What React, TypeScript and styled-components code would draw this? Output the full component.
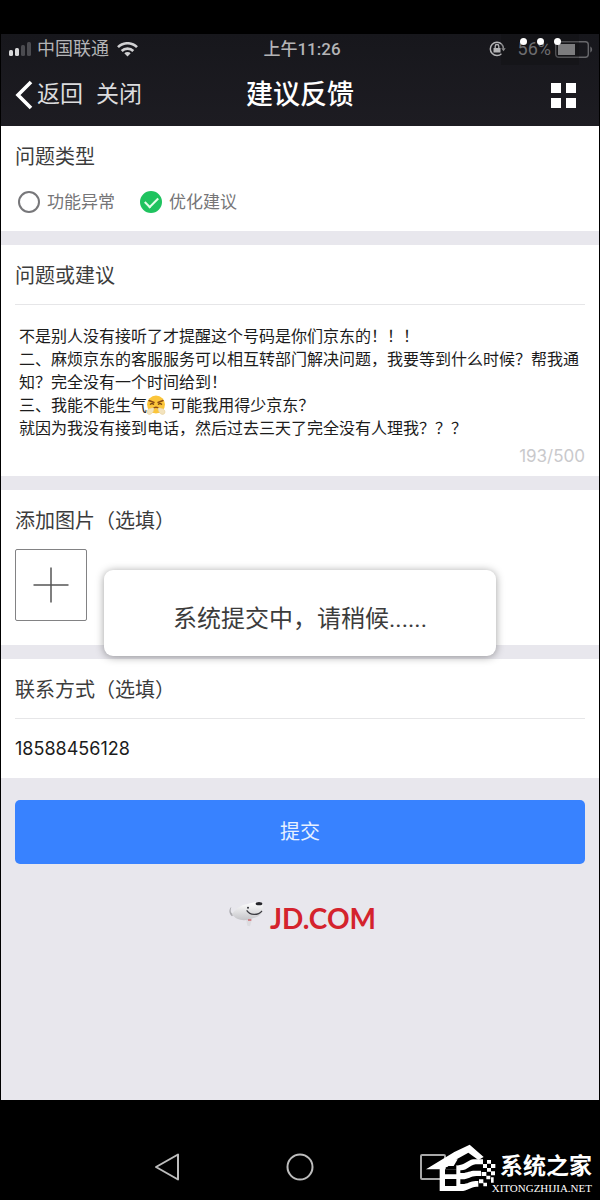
import React, { useState } from 'react';
import styled, { createGlobalStyle } from 'styled-components';

const cjk = `'Noto Sans CJK SC', sans-serif`;

const GlobalStyle = createGlobalStyle`
  * { box-sizing: border-box; }
  body {
    margin: 0;
    background: #000;
    font-family: Roboto, ${cjk};
    color: #3c3c3c;
  }
  button, input, textarea { font: inherit; color: inherit; }
`;

const Phone = styled.div`
  display: flex;
  flex-direction: column;
  min-height: 100vh;
  padding: 34px 1px 0;
  background: #000;
`;

const Header = styled.header`
  position: relative;
  background: linear-gradient(#17171c, #1d1c22);
`;

const StatusBar = styled.div`
  display: grid;
  grid-template-columns: 1fr auto 1fr;
  align-items: center;
  height: 30px;
  padding: 0 6px;
  color: #b4b4b6;
  font-size: 18px;
  line-height: 28px;
`;

const StatusGroup = styled.div<{ $end?: boolean }>`
  display: flex;
  align-items: center;
  gap: ${(p) => (p.$end ? 4 : 5)}px;
  justify-content: ${(p) => (p.$end ? 'flex-end' : 'flex-start')};
`;

const Carrier = styled.span`
  margin-right: 3px;
`;

const Clock = styled.span`
  padding-left: 4px;
  font-weight: 500;
  font-size: 17px;
`;

const BatteryText = styled.span`
  margin-left: 8px;
  color: #8e8e91;
`;

const MoreOverlay = styled.div`
  position: absolute;
  top: 0;
  right: 20px;
  display: flex;
  justify-content: center;
  gap: 10px;
  width: 78px;
  height: 31px;
  padding-top: 4px;
  background: rgba(10, 10, 13, 0.25);
`;

const Dot = styled.i`
  width: 7px;
  height: 7px;
  border-radius: 50%;
  background: #fff;
`;

const NavBar = styled.nav`
  display: grid;
  grid-template-columns: 1fr auto 1fr;
  align-items: center;
  height: 62px;
  padding: 0 13px;
  color: #dcdcde;
`;

const NavActions = styled.div`
  display: flex;
  align-items: center;
  gap: 13px;
`;

const NavButton = styled.button`
  display: flex;
  align-items: center;
  gap: 3px;
  padding: 0;
  border: 0;
  background: none;
  font-size: 23px;
  line-height: 32px;
`;

const NavTitle = styled.h1`
  margin: 0;
  color: #fff;
  font-size: 27px;
  font-weight: 500;
  line-height: 40px;
`;

const MenuButton = styled.button`
  justify-self: end;
  display: grid;
  grid-template-columns: 10px 10px;
  gap: 5px;
  margin-right: 10px;
  padding: 0;
  border: 0;
  background: none;
`;

const MenuSquare = styled.i`
  height: 10px;
  background: #fff;
`;

const Form = styled.form`
  flex: 1;
  display: flex;
  flex-direction: column;
  gap: 14px;
  background: #e8e7ed;
`;

const Section = styled.section`
  position: relative;
  padding: 0 14px;
  background: #fff;
`;

const SectionTitle = styled.h2<{ $divided?: boolean }>`
  margin: 0;
  padding-top: 3px;
  font-size: 20px;
  font-weight: 400;
  line-height: 56px;
  border-bottom: ${(p) => (p.$divided ? '1px solid #e6e6e8' : '0')};
`;

const Options = styled.div`
  display: flex;
  gap: 25px;
  padding: 3px 3px 15px;
`;

const Option = styled.label`
  display: flex;
  align-items: center;
  gap: 7px;
  color: #757577;
  font-size: 17px;
  line-height: 28px;
`;

const Radio = styled.input`
  appearance: none;
  display: grid;
  place-items: center;
  width: 22px;
  height: 22px;
  margin: 0;
  border: 2px solid #77777a;
  border-radius: 50%;
  &:checked {
    border-color: #1fc35f;
    background: #1fc35f;
  }
  &:checked::before {
    content: '';
    width: 11px;
    height: 6px;
    margin-bottom: 3px;
    border: solid #e4ffe9;
    border-width: 0 0 2px 2px;
    transform: rotate(-45deg);
  }
`;

const MessageBox = styled.div`
  position: relative;
  padding-top: 19px;
`;

const Message = styled.textarea`
  display: block;
  width: 100%;
  height: 120px;
  padding: 0 4px;
  border: 0;
  outline: 0;
  resize: none;
  overflow: hidden;
  background: none;
  color: #1c1c1c;
  font-family: ${cjk};
  font-size: 16px;
  line-height: 23px;
`;

const Emoji = styled.svg`
  position: absolute;
  top: 90px;
  left: 131px;
`;

const Counter = styled.div`
  padding-bottom: 8px;
  color: #c9c9cc;
  font-family: Inter, sans-serif;
  font-size: 17px;
  line-height: 24px;
  text-align: right;
`;

const AddImage = styled.button`
  display: grid;
  place-items: center;
  width: 72px;
  height: 72px;
  margin-bottom: 24px;
  padding: 0;
  border: 1px solid #828284;
  border-radius: 2px;
  background: #fff;
`;

const Toast = styled.div`
  position: absolute;
  z-index: 1;
  top: 80px;
  left: 0;
  right: 0;
  width: 392px;
  max-width: 90%;
  margin: 0 auto;
  border-radius: 9px;
  background: #fff;
  box-shadow: 0 1px 9px rgba(0, 0, 0, 0.38);
  font-size: 24px;
  line-height: 36px;
  padding: 31px 0 19px;
  text-align: center;
`;

const PhoneNumber = styled.input`
  display: block;
  width: 100%;
  height: 59px;
  padding: 0;
  border: 0;
  outline: 0;
  background: none;
  color: #1c1c1c;
  font-family: Inter, sans-serif;
  font-size: 18px;
`;

const Footer = styled.div`
  padding: 8px 14px 160px;
`;

const Submit = styled.button`
  display: block;
  width: 100%;
  height: 64px;
  padding: 0 0 4px;
  border: 0;
  border-radius: 5px;
  background: #3882ff;
  color: #e8f1ff;
  font-size: 20px;
`;

const Brand = styled.div`
  display: flex;
  justify-content: center;
  align-items: flex-start;
  gap: 6px;
  margin-top: 35px;
  padding-left: 4px;
  color: #d4232d;
  font-family: Lato, sans-serif;
  font-size: 28px;
  font-weight: 700;
  line-height: 38px;
`;

const SystemBar = styled.footer`
  position: relative;
  height: 100px;
  padding-top: 33px;
`;

const SystemKeys = styled.div`
  display: grid;
  grid-template-columns: repeat(3, 1fr);
  max-width: 399px;
  height: 67px;
  margin: 0 auto;
`;

const KeyButton = styled.button`
  display: grid;
  place-items: center;
  padding: 0;
  border: 0;
  background: none;
`;

const Watermark = styled.div`
  position: absolute;
  right: 7px;
  bottom: 4px;
  display: flex;
  color: #fff;
`;

const WatermarkText = styled.div`
  display: flex;
  flex-direction: column;
  align-items: flex-end;
  padding-top: 12px;
  margin-left: -9px;
`;

const WatermarkName = styled.strong`
  font-size: 23px;
  font-weight: 700;
  line-height: 30px;
`;

const WatermarkSite = styled.span`
  font-family: 'Liberation Serif', serif;
  font-size: 11px;
  line-height: 12px;
`;

const initialMessage = [
  '不是别人没有接听了才提醒这个号码是你们京东的！！！',
  '二、麻烦京东的客服服务可以相互转部门解决问题，我要等到什么时候？帮我通知？完全没有一个时间给到！',
  '三、我能不能生气\u3000\u00a0\u00a0可能我用得少京东？',
  '就因为我没有接到电话，然后过去三天了完全没有人理我？？？',
].join('\n');

const SignalIcon = () => (
  <svg width="25" height="16" viewBox="0 0 25 16">
    <rect x="2" y="9" width="4" height="6" rx="1.500" fill="#d8d8da" />
    <rect x="8" y="7" width="4" height="8" rx="1.500" fill="#d8d8da" />
    <rect x="14" y="4" width="4" height="11" rx="1.500" fill="#4b4b50" />
    <rect x="20" y="1" width="4" height="14" rx="1.500" fill="#4b4b50" />
  </svg>
);

const WifiIcon = () => (
  <svg width="21" height="15" viewBox="0 0 21 15" fill="none" stroke="#d0d0d2" strokeWidth="2.600">
    <path d="M1 5.200a13.400 13.400 0 0 1 19 0" />
    <path d="M4.700 9a8.200 8.200 0 0 1 11.600 0" />
    <path d="M10.500 14.500 7.300 11.300a4.500 4.500 0 0 1 6.400 0Z" fill="#d0d0d2" stroke="none" />
  </svg>
);

const LockIcon = () => (
  <svg width="17" height="16" viewBox="0 0 17 16" fill="none" stroke="#b4b4b6">
    <path d="M12.600 3A6.700 6.700 0 1 0 12.600 12.800" strokeWidth="1.500" />
    <path d="M12.300 2.700A6.700 6.700 0 0 1 14.400 7.500" strokeWidth="1.500" />
    <path d="M12.300 7.200h4.400l-2.200 3Z" fill="#b4b4b6" stroke="none" />
    <rect x="4.500" y="7" width="7" height="4.500" fill="#b4b4b6" stroke="none" />
    <path d="M6.200 7V5.300a1.800 1.800 0 0 1 3.600 0V7" strokeWidth="1.300" />
  </svg>
);

const BatteryIcon = () => (
  <svg width="38" height="17" viewBox="0 0 38 17">
    <rect x="0.700" y="0.700" width="32.600" height="15.600" rx="3" fill="none" stroke="#66666a" strokeWidth="1.400" />
    <rect x="3" y="3" width="17" height="11" fill="#a2a2a4" />
    <path d="M35.300 5.500c2.400 1 2.400 5 0 6Z" fill="#66666a" />
  </svg>
);

const BackIcon = () => (
  <svg width="20" height="30" viewBox="0 0 20 30" fill="none" stroke="#fff" strokeWidth="3.600">
    <path d="M17 2 4 15 17 28" />
  </svg>
);

const SteamFace = () => (
  <Emoji width="20" height="20" viewBox="0 0 20 20" aria-hidden="true">
    <circle cx="10" cy="9.500" r="9" fill="#fbc53a" />
    <path d="M3 5.500 8 7.500M17 5.500 12 7.500" stroke="#8a4b14" strokeWidth="1.400" strokeLinecap="round" />
    <path d="M4 9.500q2-1.600 4 0M12 9.500q2-1.600 4 0" stroke="#6b3a12" strokeWidth="1.300" fill="none" />
    <path d="M6.500 14q3.500-3.400 7 0" stroke="#8a4b14" strokeWidth="1.300" fill="none" />
    <path d="M8 13C5 12.500 1 14 1 17s4 3 5 1c1.500-1 2-3 2-5ZM12 13c3-.500 7 1 7 4s-4 3-5 1c-1.500-1-2-3-2-5Z" fill="#f3e3bd" stroke="#e3c98a" strokeWidth="0.500" />
  </Emoji>
);

const DogLogo = () => (
  <svg width="36" height="30" viewBox="0 0 108 90">
    <defs>
      <linearGradient id="dog" x1="0" y1="0" x2="0" y2="1">
        <stop offset="0" stopColor="#ffffff" />
        <stop offset="1" stopColor="#c4c4c8" />
      </linearGradient>
    </defs>
    <path d="M18 46C8 44 6 36 10 24C2 30 2 44 12 52Z" fill="#a9a9ae" />
    <path d="M54 60 58 80 66 82 72 60Z" fill="#dcdce0" />
    <path d="M12 46C22 30 42 16 58 16C72 8 104 6 104 18C108 38 98 54 76 57C52 68 26 66 12 46Z" fill="url(#dog)" />
    <path d="M56 34C66 50 90 50 102 36" fill="none" stroke="#3c3c42" strokeWidth="3.500" />
    <ellipse cx="93" cy="14" rx="10" ry="5" fill="#26262b" />
    <circle cx="60" cy="26" r="3" fill="#303036" />
    <path d="M60 63 70 63" stroke="#cf5a5f" strokeWidth="4" />
  </svg>
);

const HouseLogo = () => (
  <svg width="84" height="56" viewBox="0 0 252 168" fill="#fff">
    <path d="M27 88 112 36 158 14 200 51 184 60 154 38 108 64 92 80 68 88Z" />
    <path d="M68 78 98 58H122L110 78H84V88H118V76C140 78 150 62 168 58H198V73H176C158 75 152 91 132 91H130V99H136C152 98 158 92 174 92H192V108H178C162 108 154 118 136 118H130V132H136C152 132 160 124 176 123H184V140H178C162 141 150 153 132 153H68Z" />
    <path d="M84 88H118V103H84ZM84 117H118V138H84Z" fill="#000" />
    <path d="M210 60h12v11h-12ZM198 72h12v12h-12ZM222 72h13v12h-13ZM210 84h12v11h-12ZM194 96h14v12h-14ZM222 94h12v12h-12ZM208 107h12v11h-12ZM186 118h13v12h-13ZM222 112h8v16h-8ZM199 128h11v11h-11Z" />
  </svg>
);

export default function App() {
  const [kind, setKind] = useState('suggestion');
  const [message, setMessage] = useState(initialMessage);
  const [contact, setContact] = useState('18588456128');

  return (
    <>
      <GlobalStyle />
      <Phone>
        <Header>
          <StatusBar>
            <StatusGroup>
              <SignalIcon />
              <Carrier>中国联通</Carrier>
              <WifiIcon />
            </StatusGroup>
            <Clock>上午11:26</Clock>
            <StatusGroup $end>
              <LockIcon />
              <BatteryText>56%</BatteryText>
              <BatteryIcon />
            </StatusGroup>
          </StatusBar>
          <NavBar>
            <NavActions>
              <NavButton type="button">
                <BackIcon />
                返回
              </NavButton>
              <NavButton type="button">关闭</NavButton>
            </NavActions>
            <NavTitle>建议反馈</NavTitle>
            <MenuButton type="button" aria-label="菜单">
              <MenuSquare />
              <MenuSquare />
              <MenuSquare />
              <MenuSquare />
            </MenuButton>
          </NavBar>
          <MoreOverlay>
            <Dot />
            <Dot />
            <Dot />
          </MoreOverlay>
        </Header>

        <Form onSubmit={(e) => e.preventDefault()}>
          <Section>
            <SectionTitle>问题类型</SectionTitle>
            <Options>
              <Option>
                <Radio type="radio" name="kind" checked={kind === 'fault'} onChange={() => setKind('fault')} />
                功能异常
              </Option>
              <Option>
                <Radio type="radio" name="kind" checked={kind === 'suggestion'} onChange={() => setKind('suggestion')} />
                优化建议
              </Option>
            </Options>
          </Section>

          <Section>
            <SectionTitle $divided id="message-title">问题或建议</SectionTitle>
            <MessageBox>
              <Message
                aria-labelledby="message-title"
                spellCheck={false}
                value={message}
                onChange={(e) => setMessage(e.target.value)}
              />
              <SteamFace />
            </MessageBox>
            <Counter>193/500</Counter>
          </Section>

          <Section>
            <SectionTitle>添加图片（选填）</SectionTitle>
            <AddImage type="button" aria-label="添加图片">
              <svg width="36" height="36" viewBox="0 0 36 36" stroke="#555" strokeWidth="1.500">
                <path d="M18 0.500V35.500M0.500 18H35.500" />
              </svg>
            </AddImage>
            <Toast role="status">系统提交中，请稍候......</Toast>
          </Section>

          <Section>
            <SectionTitle $divided id="contact-title">联系方式（选填）</SectionTitle>
            <PhoneNumber
              type="tel"
              aria-labelledby="contact-title"
              value={contact}
              onChange={(e) => setContact(e.target.value)}
            />
          </Section>

          <Footer>
            <Submit type="submit">提交</Submit>
            <Brand>
              <DogLogo />
              <span>JD.COM</span>
            </Brand>
          </Footer>
        </Form>

        <SystemBar>
          <SystemKeys>
            <KeyButton type="button" aria-label="后退">
              <svg width="26" height="28" viewBox="0 0 26 28" fill="none" stroke="#bdbdbd" strokeWidth="2" strokeLinejoin="round">
                <path d="M2 14 24 1.500V26.500Z" />
              </svg>
            </KeyButton>
            <KeyButton type="button" aria-label="主页">
              <svg width="28" height="28" viewBox="0 0 28 28" fill="none" stroke="#bdbdbd" strokeWidth="2">
                <circle cx="14" cy="14" r="12.500" />
              </svg>
            </KeyButton>
            <KeyButton type="button" aria-label="最近任务">
              <svg width="26" height="26" viewBox="0 0 26 26" fill="none" stroke="#a8a8a8" strokeWidth="2">
                <rect x="1" y="1" width="24" height="24" rx="1" />
              </svg>
            </KeyButton>
          </SystemKeys>
          <Watermark>
            <HouseLogo />
            <WatermarkText>
              <WatermarkName>系统之家</WatermarkName>
              <WatermarkSite>XITONGZHIJIA.NET</WatermarkSite>
            </WatermarkText>
          </Watermark>
        </SystemBar>
      </Phone>
    </>
  );
}
